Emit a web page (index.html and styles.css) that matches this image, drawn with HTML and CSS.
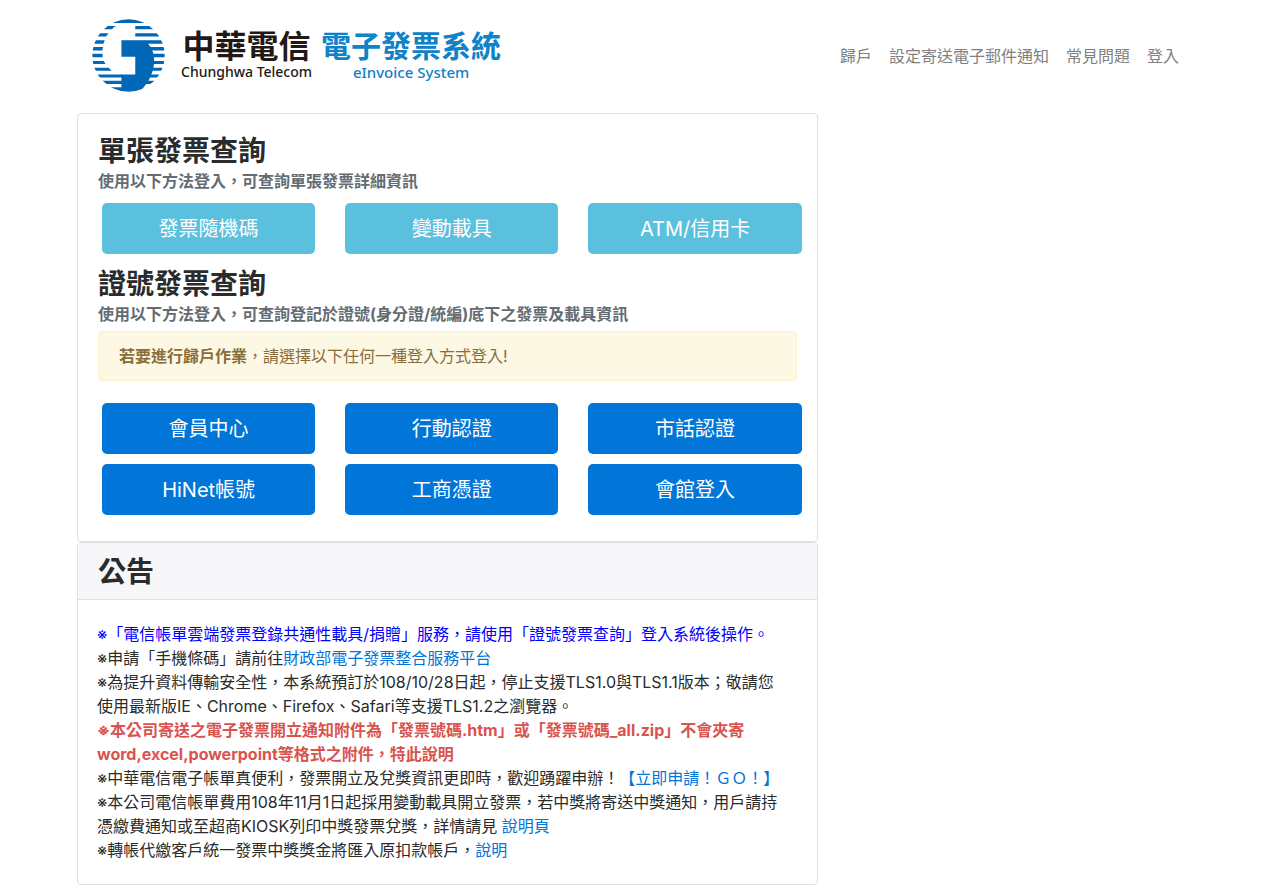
FILE: index.html
```html
<!DOCTYPE html>
<html lang="zh-Hant">
<head>
<meta charset="utf-8">
<meta name="viewport" content="width=device-width, initial-scale=1">
<title>中華電信電子發票系統</title>
<link rel="stylesheet" href="styles.css">
</head>
<body>
<header class="container navbar">
  <a class="brand" href="#">
    <svg class="brand-mark" viewBox="22 22 216 216" aria-hidden="true">
      <defs>
        <clipPath id="globe"><circle cx="130" cy="130" r="107"/></clipPath>
      </defs>
      <g clip-path="url(#globe)" fill="#0068b7">
        <path d="M60 22H200V34H60Z"/>
        <path d="M22 43H94Q86 46 81 52H22ZM22 64H71Q66 69 64 74H22ZM22 85H60Q57 90 56 95H22ZM22 105H55Q53 110 53 115H22ZM22 125H53Q53 130 54 135H22ZM22 146H57Q59 151 62 155H22ZM22 166H71Q76 171 80 175H22ZM22 186H112V195H22ZM22 205H112V214H22ZM22 224H112V240H22Z"/>
        <path d="M150 43H240V52H150ZM150 64H240V74H150ZM175 85H240V95H175ZM190 105H240V115H190ZM200 125H240V135H200ZM200 146H240V155H200ZM198 166H240V175H198ZM190 186H240V195H190ZM175 205H240V214H175Z"/>
        <path d="M109 85H175C196 98 206 120 206 143C206 178 190 212 160 240H109V186H150V134H109Z"/>
      </g>
    </svg>
    <span class="brand-block brand-company">
      <span class="brand-zh">中華電信</span>
      <span class="brand-en">Chunghwa Telecom</span>
    </span>
    <span class="brand-block brand-system">
      <span class="brand-zh">電子發票系統</span>
      <span class="brand-en">eInvoice System</span>
    </span>
  </a>
  <nav class="nav">
    <a href="#">歸戶</a>
    <a href="#">設定寄送電子郵件通知</a>
    <a href="#">常見問題</a>
    <a href="#">登入</a>
  </nav>
</header>
<main class="container">
  <div class="main-column">
    <section class="card query-card">
      <h2 class="title">單張發票查詢</h2>
      <p class="subtitle">使用以下方法登入，可查詢單張發票詳細資訊</p>
      <div class="button-grid">
        <button class="btn btn-info" type="button">發票隨機碼</button>
        <button class="btn btn-info" type="button">變動載具</button>
        <button class="btn btn-info" type="button">ATM/信用卡</button>
      </div>
      <h2 class="title title-next">證號發票查詢</h2>
      <p class="subtitle">使用以下方法登入，可查詢登記於證號(身分證/統編)底下之發票及載具資訊</p>
      <div class="alert" role="alert"><strong>若要進行歸戶作業</strong>，請選擇以下任何一種登入方式登入!</div>
      <div class="button-grid login-grid">
        <button class="btn btn-primary" type="button">會員中心</button>
        <button class="btn btn-primary" type="button">行動認證</button>
        <button class="btn btn-primary" type="button">市話認證</button>
        <button class="btn btn-primary" type="button">HiNet帳號</button>
        <button class="btn btn-primary" type="button">工商憑證</button>
        <button class="btn btn-primary" type="button">會館登入</button>
      </div>
    </section>
    <section class="card">
      <div class="card-header"><h2 class="title">公告</h2></div>
      <div class="news">
        <p class="news-blue">※「電信帳單雲端發票登錄共通性載具/捐贈」服務，請使用「證號發票查詢」登入系統後操作。</p>
        <p>※申請「手機條碼」請前往<a href="#">財政部電子發票整合服務平台</a></p>
        <p>※為提升資料傳輸安全性，本系統預訂於108/10/28日起，停止支援TLS1.0與TLS1.1版本；敬請您<br>使用最新版IE、Chrome、Firefox、Safari等支援TLS1.2之瀏覽器。</p>
        <p class="news-red">※本公司寄送之電子發票開立通知附件為「發票號碼.htm」或「發票號碼_all.zip」不會夾寄<br>word,excel,powerpoint等格式之附件，特此說明</p>
        <p>※中華電信電子帳單真便利，發票開立及兌獎資訊更即時，歡迎踴躍申辦！<a href="#">【立即申請！ＧＯ！】</a></p>
        <p>※本公司電信帳單費用108年11月1日起採用變動載具開立發票，若中獎將寄送中獎通知，用戶請持<br>憑繳費通知或至超商KIOSK列印中獎發票兌獎，詳情請見 <a href="#">說明頁</a></p>
        <p>※轉帳代繳客戶統一發票中獎獎金將匯入原扣款帳戶，<a href="#">說明</a></p>
      </div>
    </section>
  </div>
</main>
</body>
</html>
```
FILE: styles.css
```css
* {
  box-sizing: border-box;
}

body {
  margin: 0;
  background: #fff;
  color: #292b2c;
  font-family: Inter, "Noto Sans CJK TC", sans-serif;
  font-size: 16px;
  line-height: 24px;
}

h2,
p {
  margin: 0;
}

a {
  color: #0275d8;
  text-decoration: none;
}

.container {
  max-width: 1156px;
  margin: 0 auto;
}

.navbar {
  display: flex;
  align-items: center;
  justify-content: space-between;
  padding: 19px 39px 21px 30px;
}

.brand {
  display: flex;
  align-items: center;
  font-family: "Noto Sans", "Noto Sans CJK TC", sans-serif;
  font-weight: 500;
}

.brand-mark {
  width: 73px;
  height: 73px;
}

.brand-block {
  display: flex;
  flex-direction: column;
  align-items: center;
}

.brand-company {
  margin-left: 16px;
  color: #231815;
}

.brand-system {
  margin-left: 9px;
  color: #0f82c8;
}

.brand-zh {
  font-size: 30px;
  font-weight: 700;
  line-height: 32px;
}

.brand-company .brand-zh {
  font-size: 32px;
}

.brand-en {
  font-size: 15px;
  line-height: 20px;
}

.brand-company .brand-en {
  font-size: 14px;
}

.nav {
  display: flex;
  gap: 17px;
}

.nav a {
  color: #808080;
}

.main-column {
  width: 66.67%;
  padding: 0 15px;
}

.card {
  border: 1px solid #dfdfdf;
  border-radius: 4px;
}

.query-card {
  padding: 21px 20px 26px;
}

.title {
  font-size: 28px;
  font-weight: 700;
  line-height: 32px;
}

.title-next {
  margin-top: 14px;
}

.subtitle {
  margin-top: 2px;
  color: #636c72;
  font-weight: 700;
}

.button-grid {
  display: grid;
  grid-template-columns: repeat(3, 1fr);
  gap: 10px 30px;
  margin: 10px -5px 0 4px;
}

.login-grid {
  margin-top: 22px;
}

.btn {
  padding: 13px 16px 11px;
  border: 0;
  border-radius: 5px;
  color: #fff;
  font-family: inherit;
  font-size: 20px;
  line-height: 27px;
}

.btn-info {
  background: #5bc0de;
}

.btn-primary {
  background: #0275d8;
}

.alert {
  margin-top: 5px;
  padding: 12px 20px;
  border: 1px solid #faf2cc;
  border-radius: 4px;
  background: #fcf8e3;
  color: #8a6d3b;
}

.card-header {
  padding: 13px 20px 11px;
  border-bottom: 1px solid #dfdfdf;
  background: #f7f7f9;
}

.news {
  padding: 22px 19px;
}

.news-blue {
  color: #00f;
}

.news-red {
  color: #d9534f;
  font-weight: 700;
}
```
